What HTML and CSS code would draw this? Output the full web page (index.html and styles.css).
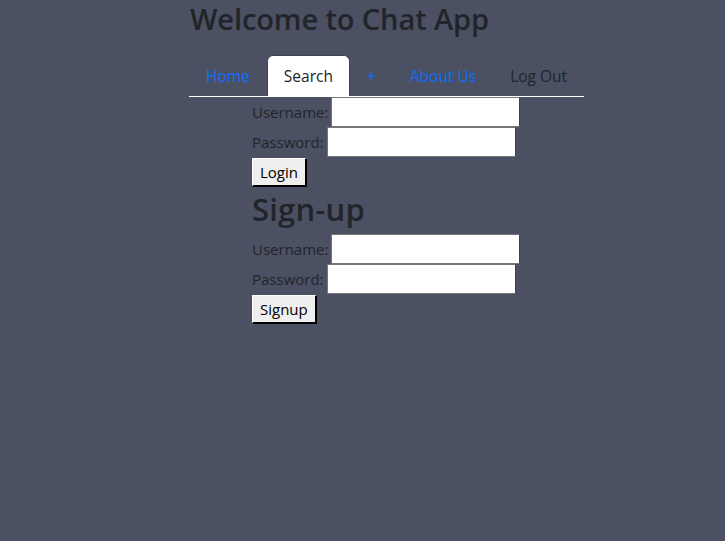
FILE: index.html
```html
<!DOCTYPE html>
<html lang="en">
<head>
<meta charset="utf-8">
<title>Chat App</title>
<link rel="stylesheet" href="styles.css">
</head>
<body>
<div class="page">
  <h1 class="title">Welcome to Chat App</h1>
  <nav class="tabs">
    <a class="tab link">Home</a>
    <a class="tab active">Search</a>
    <a class="tab link">+</a>
    <a class="tab link">About Us</a>
    <a class="tab plain">Log Out</a>
  </nav>
  <div class="forms">
    <form class="form">
      <div class="row"><label>Username:</label><input class="in-user" type="text"></div>
      <div class="row"><label>Password:</label><input class="in-pass" type="password"></div>
      <div class="row"><button type="button" class="btn">Login</button></div>
    </form>
    <h2 class="sub">Sign-up</h2>
    <form class="form">
      <div class="row"><label>Username:</label><input class="in-user" type="text"></div>
      <div class="row"><label>Password:</label><input class="in-pass" type="password"></div>
      <div class="row"><button type="button" class="btn">Signup</button></div>
    </form>
  </div>
</div>
</body>
</html>
```
FILE: styles.css
```css
html, body {
  margin: 0;
  padding: 0;
  background: #4b5063;
  height: 100%;
}
body {
  font-family: "Open Sans", "Noto Sans", sans-serif;
  font-size: 16px;
  color: #212529;
  line-height: 1.5;
}
.page {
  padding-left: 189px;
  display: flex;
  flex-direction: column;
  align-items: flex-start;
}
.title {
  margin: 0 0 17px 1px;
  font-size: 29px;
  font-weight: 600;
  line-height: 38px;
  letter-spacing: -0.1px;
}
.tabs {
  display: flex;
  border-bottom: 1px solid #ffffff;
}
.tab {
  display: block;
  padding: 8px 16px;
  border: 1px solid transparent;
  border-bottom: 0;
  border-radius: 6px 6px 0 0;
  line-height: 24px;
  font-size: 15.5px;
  text-decoration: none;
  cursor: pointer;
}
.link { color: #0d6efd; }
.plain { color: #212529; }
.active {
  background: #ffffff;
  color: #212529;
  border-color: #3d4254;
}
.forms {
  padding-left: 63px;
}
.form { margin: 0; }
.row {
  display: flex;
  align-items: center;
  height: 30px;
}
.row label {
  font-size: 15px;
  margin-right: 3px;
}
.row input {
  height: 30px;
  box-sizing: border-box;
  border: 1px solid #767676;
  border-right-color: #3d4254;
  background: #fff;
  padding: 1px 2px;
}
.in-user { width: 189px; }
.in-pass { width: 189px; }
.btn {
  margin-top: 1px;
  height: 29px;
  padding: 0 7px;
  font-family: "Open Sans", "Noto Sans", sans-serif;
  font-size: 15px;
  color: #000;
  background: #efefef;
  border-style: solid;
  border-color: #fff #000 #000 #fff;
  border-width: 1px 2px 2px 1px;
}
.sub {
  margin: 3px 0 6px;
  font-size: 31px;
  font-weight: 600;
  line-height: 38px;
  letter-spacing: 0.2px;
}
```
